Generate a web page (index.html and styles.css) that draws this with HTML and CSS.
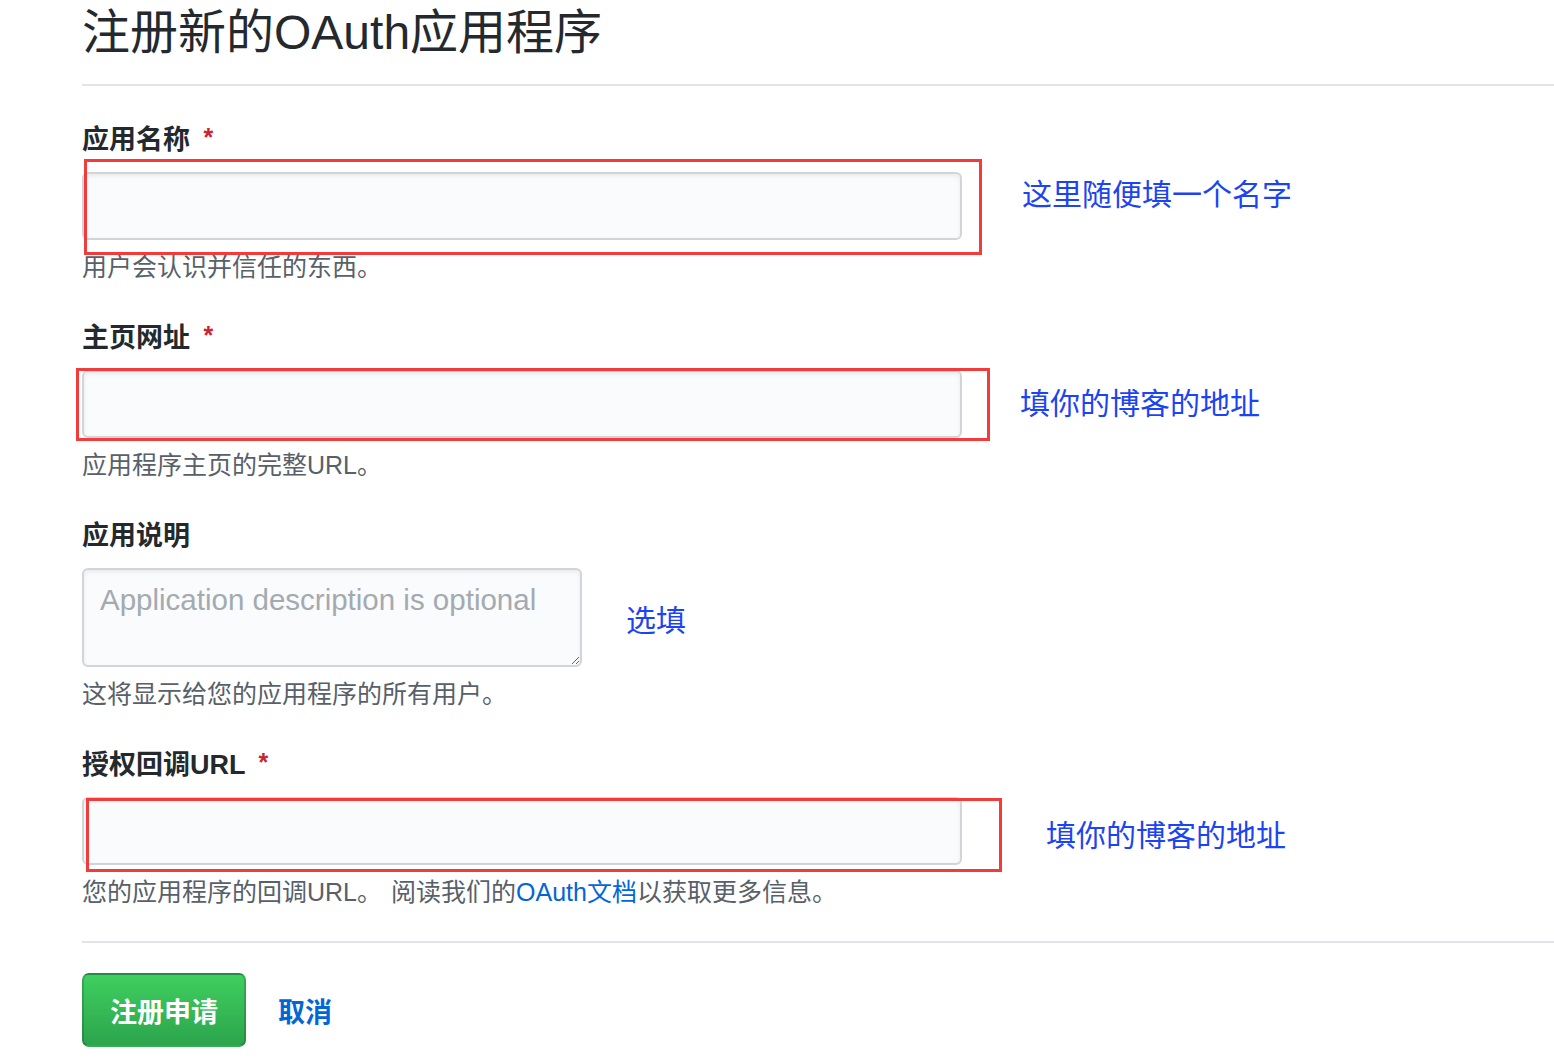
FILE: index.html
```html
<!DOCTYPE html>
<html lang="zh-CN">
<head>
  <meta charset="UTF-8" />
  <title>注册新的OAuth应用程序</title>
  <link rel="stylesheet" href="styles.css">
</head>
<body>
  <div class="page">
    <h1 class="page-title">注册新的OAuth应用程序</h1>

    <form class="app-form">
      <div class="field">
        <label class="field-label" for="appName">应用名称 <span class="req">*</span></label>
        <div class="field-row">
          <div class="control">
            <input class="form-control" id="appName" type="text" />
            <span class="mark mark-name"></span>
          </div>
          <span class="note note-name">这里随便填一个名字</span>
        </div>
        <p class="hint">用户会认识并信任的东西。</p>
      </div>

      <div class="field">
        <label class="field-label" for="homeUrl">主页网址 <span class="req">*</span></label>
        <div class="field-row">
          <div class="control">
            <input class="form-control" id="homeUrl" type="text" />
            <span class="mark mark-home"></span>
          </div>
          <span class="note note-home">填你的博客的地址</span>
        </div>
        <p class="hint">应用程序主页的完整URL。</p>
      </div>

      <div class="field">
        <label class="field-label" for="appDesc">应用说明</label>
        <div class="field-row">
          <div class="control">
            <textarea class="form-control textarea" id="appDesc" placeholder="Application description is optional"></textarea>
          </div>
          <span class="note note-desc">选填</span>
        </div>
        <p class="hint">这将显示给您的应用程序的所有用户。</p>
      </div>

      <div class="field field-last">
        <label class="field-label" for="callbackUrl">授权回调URL <span class="req">*</span></label>
        <div class="field-row">
          <div class="control">
            <input class="form-control" id="callbackUrl" type="text" />
            <span class="mark mark-callback"></span>
          </div>
          <span class="note note-callback">填你的博客的地址</span>
        </div>
        <p class="hint">您的应用程序的回调URL<span class="stop">。</span>阅读我们的<a href="#">OAuth文档</a>以获取更多信息。</p>
      </div>

      <div class="form-actions">
        <button class="btn-primary" type="button">注册申请</button>
        <a class="btn-link" href="#">取消</a>
      </div>
    </form>
  </div>
</body>
</html>
```

FILE: styles.css
```css
body {
  margin: 0;
  font-family: "Liberation Sans", "Noto Sans CJK SC", sans-serif;
  color: #24292e;
  background: #fff;
}

.page {
  padding-left: 82px;
  overflow: hidden;
}

.page-title {
  margin: 3px 0 0;
  height: 60px;
  padding-bottom: 21px;
  font-size: 48px;
  line-height: 60px;
  font-weight: 400;
  border-bottom: 2px solid #e1e4e8;
}

.app-form {
  margin-top: 34px;
}

.field {
  margin-bottom: 33px;
}

.field-last {
  margin-bottom: 31px;
}

.field-label {
  display: block;
  height: 40px;
  font-size: 27px;
  line-height: 40px;
  font-weight: 700;
  margin-bottom: 12px;
}

.req {
  color: #cb2431;
  font-size: 25px;
  line-height: 0;
  vertical-align: 3px;
  margin-left: 6px;
}

.field-row {
  display: flex;
  align-items: center;
}

.control {
  position: relative;
  display: flex;
}

.form-control {
  box-sizing: border-box;
  width: 880px;
  height: 68px;
  padding: 0 16px;
  font-family: "Liberation Sans", "Noto Sans CJK SC", sans-serif;
  font-size: 27px;
  color: #24292e;
  background: #fafbfc;
  border: 2px solid #d1d5da;
  border-radius: 6px;
  box-shadow: inset 0 2px 4px rgba(27, 31, 35, 0.075);
  outline: none;
}

.textarea {
  width: 500px;
  height: 99px;
  padding: 12px 16px;
  font-size: 29.5px;
  line-height: 36px;
  resize: vertical;
}

.textarea::placeholder {
  color: #a3aab1;
}

/* red annotation boxes drawn over the inputs */
.mark {
  position: absolute;
  box-sizing: border-box;
  border: 3px solid #f23c3c;
  pointer-events: none;
}

.mark-name {
  left: 2px;
  top: -13px;
  width: 898px;
  height: 96px;
}

.mark-home {
  left: -6px;
  top: -2px;
  width: 914px;
  height: 73px;
}

.mark-callback {
  left: 4px;
  top: 1px;
  width: 916px;
  height: 74px;
}

.note {
  height: 40px;
  font-size: 30px;
  line-height: 40px;
  color: #1d44f2;
  white-space: nowrap;
}

.note-name {
  margin-left: 60px;
  margin-bottom: 22px;
}

.note-home {
  margin-left: 58px;
}

.note-desc {
  margin-left: 44px;
  margin-top: 6px;
}

.note-callback {
  margin-left: 84px;
  margin-top: 10px;
}

.hint {
  margin: 9px 0 0;
  height: 36px;
  font-size: 25px;
  line-height: 36px;
  color: #586069;
  white-space: nowrap;
}

.hint .stop {
  margin-right: 9px;
}

.hint a {
  color: #0366d6;
  text-decoration: none;
}

.form-actions {
  display: flex;
  align-items: center;
  gap: 32px;
  padding-top: 30px;
  border-top: 2px solid #e1e4e8;
  padding-bottom: 20px;
}

.btn-primary {
  box-sizing: border-box;
  width: 164px;
  height: 74px;
  font-family: "Liberation Sans", "Noto Sans CJK SC", sans-serif;
  font-size: 27px;
  font-weight: 700;
  color: #fff;
  background: linear-gradient(#3fcf5f, #2ca44c);
  border: 2px solid rgba(27, 31, 35, 0.2);
  border-radius: 7px;
  cursor: pointer;
}

.btn-link {
  font-size: 27px;
  font-weight: 700;
  color: #0366d6;
  text-decoration: none;
}
```
